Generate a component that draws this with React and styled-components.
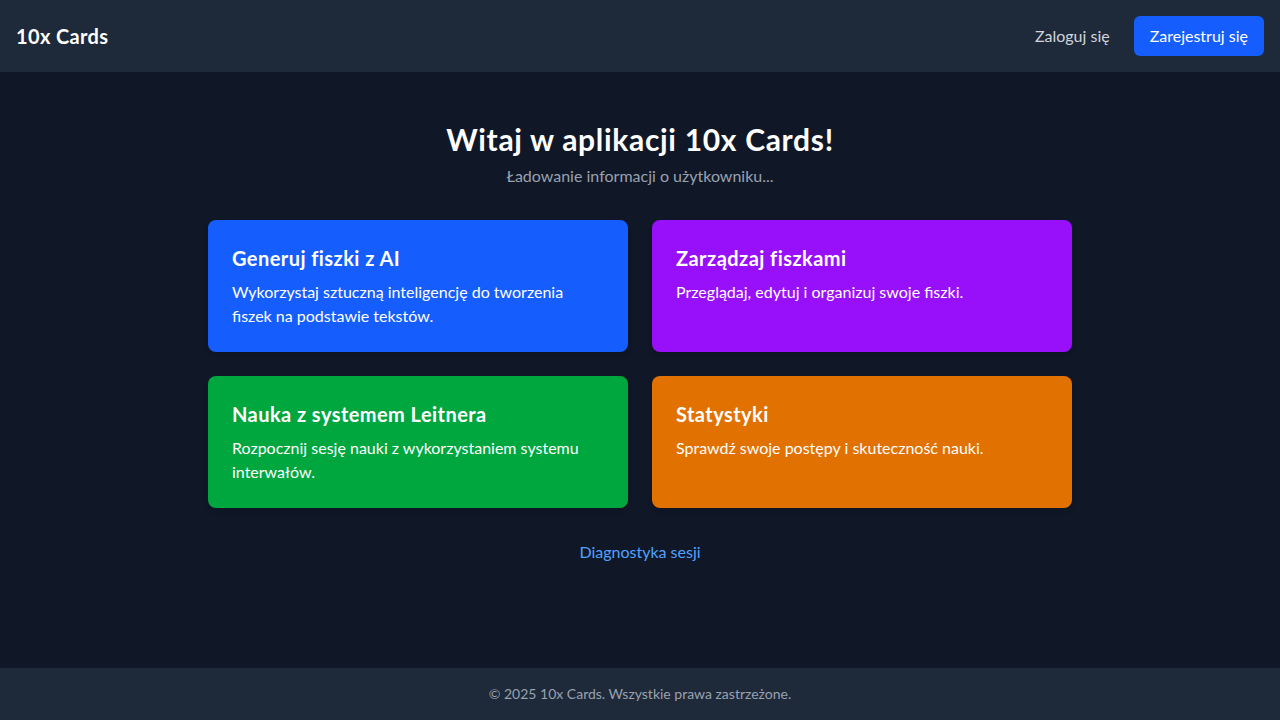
import styled, { createGlobalStyle } from 'styled-components'

const Global = createGlobalStyle`
  * { box-sizing: border-box; }
  body {
    margin: 0;
    font-family: Lato, "Noto Sans", sans-serif;
    background: #101828;
    color: #fff;
  }
`

const Page = styled.div`
  min-height: 720px;
  display: flex;
  flex-direction: column;
`

const Header = styled.header`
  background: #1e2939;
  padding: 16px;
  display: flex;
  align-items: center;
  justify-content: space-between;
`

const Logo = styled.div`
  font-size: 20px;
  line-height: 28px;
  font-weight: 700;
  letter-spacing: 0.018em;
  color: #fff;
`

const Nav = styled.nav`
  display: flex;
  align-items: center;
  gap: 8px;
`

const NavLink = styled.a`
  padding: 8px 16px;
  font-size: 16px;
  line-height: 24px;
  color: ${p => (p.$primary ? '#fff' : '#d1d5dc')};
  background: ${p => (p.$primary ? '#155dfc' : 'transparent')};
  border-radius: 6px;
  text-decoration: none;
  cursor: pointer;
`

const Main = styled.main`
  flex: 1;
  padding: 49px 16px 48px;
  display: flex;
  flex-direction: column;
  align-items: center;
`

const Title = styled.h1`
  margin: 0 0 7px;
  font-size: 30px;
  line-height: 36px;
  font-weight: 700;
  letter-spacing: 0.023em;
  text-align: center;
`

const Subtitle = styled.p`
  margin: 0 0 32px;
  font-size: 16px;
  line-height: 24px;
  color: #99a1af;
  text-align: center;
`

const Grid = styled.div`
  width: 100%;
  max-width: 864px;
  display: grid;
  grid-template-columns: 1fr 1fr;
  gap: 24px;
`

const Card = styled.a`
  display: block;
  height: 132px;
  padding: 24px;
  border-radius: 8px;
  background: ${p => p.$bg};
  box-shadow: 0 4px 6px -1px rgba(0, 0, 0, 0.1), 0 2px 4px -2px rgba(0, 0, 0, 0.1);
  color: #fff;
  text-decoration: none;
`

const CardTitle = styled.h2`
  margin: 0 0 8px;
  font-size: 20px;
  line-height: 28px;
  font-weight: 700;
  letter-spacing: 0.022em;
`

const CardText = styled.p`
  margin: 0;
  font-size: 16px;
  line-height: 24px;
`

const DiagLink = styled.a`
  margin-top: 32px;
  font-size: 16px;
  line-height: 24px;
  color: #51a2ff;
  text-decoration: none;
`

const Footer = styled.footer`
  background: #1e2939;
  padding: 16px;
  text-align: center;
  font-size: 14px;
  line-height: 20px;
  color: #99a1af;
`

const cards = [
  { title: 'Generuj fiszki z AI', text: 'Wykorzystaj sztuczną inteligencję do tworzenia fiszek na podstawie tekstów.', bg: '#155dfc' },
  { title: 'Zarządzaj fiszkami', text: 'Przeglądaj, edytuj i organizuj swoje fiszki.', bg: '#9810fa' },
  { title: 'Nauka z systemem Leitnera', text: 'Rozpocznij sesję nauki z wykorzystaniem systemu interwałów.', bg: '#00a63e' },
  { title: 'Statystyki', text: 'Sprawdź swoje postępy i skuteczność nauki.', bg: '#e17100' },
]

export default function App() {
  return (
    <Page>
      <Global />
      <Header>
        <Logo>10x Cards</Logo>
        <Nav>
          <NavLink>Zaloguj się</NavLink>
          <NavLink $primary>Zarejestruj się</NavLink>
        </Nav>
      </Header>
      <Main>
        <Title>Witaj w aplikacji 10x Cards!</Title>
        <Subtitle>Ładowanie informacji o użytkowniku...</Subtitle>
        <Grid>
          {cards.map(c => (
            <Card key={c.title} $bg={c.bg}>
              <CardTitle>{c.title}</CardTitle>
              <CardText>{c.text}</CardText>
            </Card>
          ))}
        </Grid>
        <DiagLink>Diagnostyka sesji</DiagLink>
      </Main>
      <Footer>© 2025 10x Cards. Wszystkie prawa zastrzeżone.</Footer>
    </Page>
  )
}
